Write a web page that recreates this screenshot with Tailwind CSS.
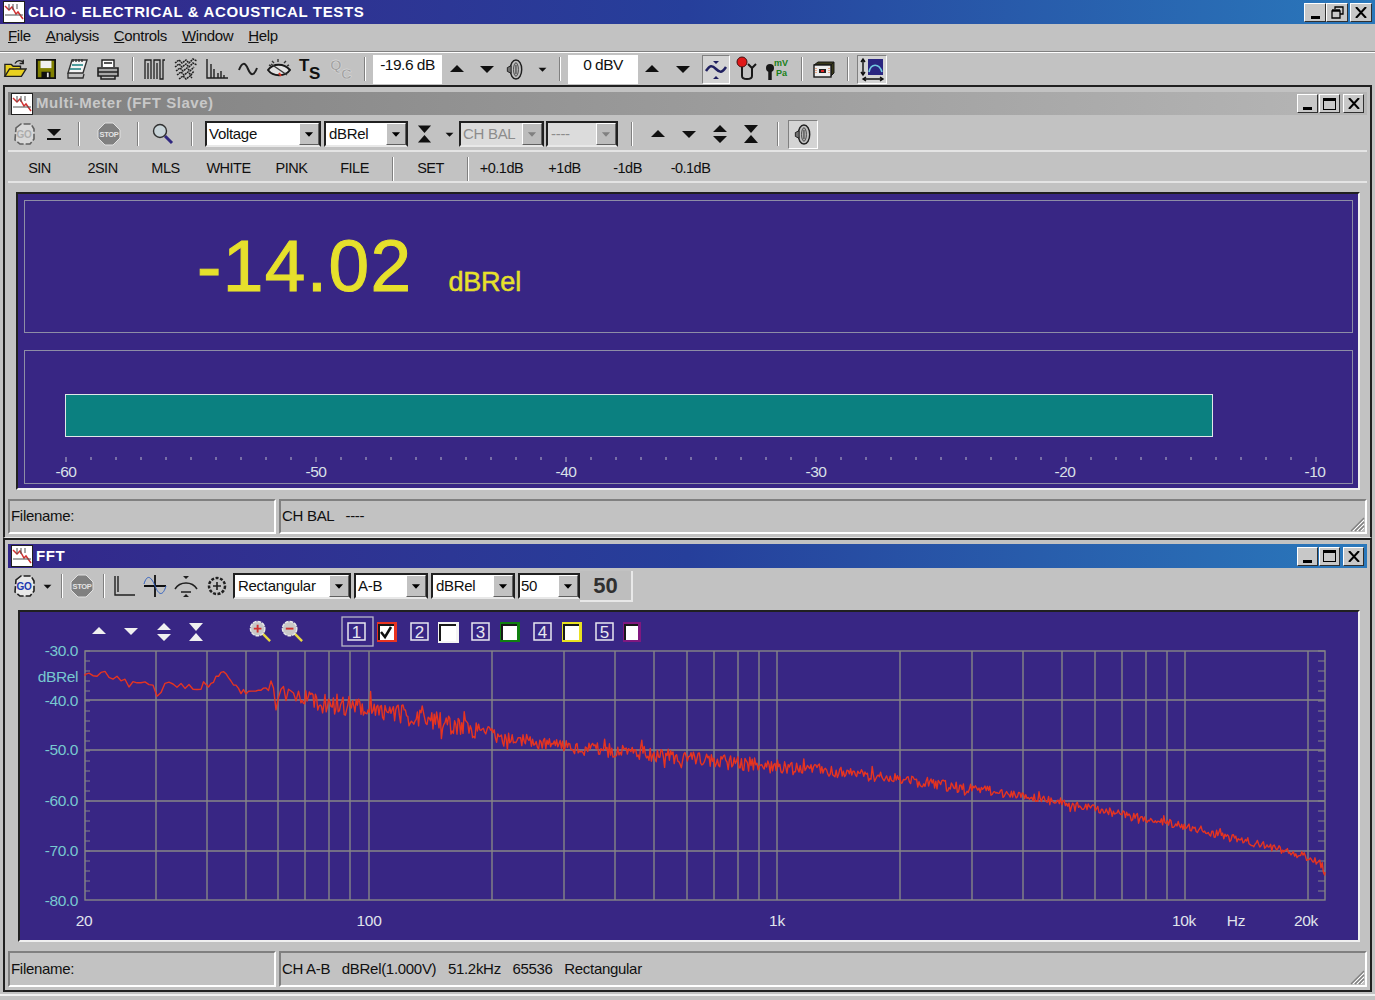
<!DOCTYPE html>
<html lang="en">
<head>
<meta charset="UTF-8" />
<title>CLIO - Electrical & Acoustical Tests</title>
<script src="https://cdn.jsdelivr.net/npm/@tailwindcss/browser@4"></script>
</head>
<body class="m-0">
<!-- shared toolbar glyphs -->
<svg width="0" height="0" class="absolute">
  <symbol id="appicon" viewBox="0 0 22 22">
    <rect x="0.5" y="0.5" width="21" height="21" fill="#fff" stroke="#202020"/>
    <path d="M2 5 6 9 9 6 13 13 15 11 20 18" fill="none" stroke="#d03030" stroke-width="1.5"/>
    <path d="M2 14H20M6 3V9M10 3V9M14 3V8" fill="none" stroke="#505050"/>
  </symbol>
  <symbol id="up" viewBox="0 0 16 12"><path d="M8 2 15 9H1Z" fill="currentColor"/></symbol>
  <symbol id="down" viewBox="0 0 16 12"><path d="M1 3H15L8 10Z" fill="currentColor"/></symbol>
  <symbol id="updown" viewBox="0 0 16 20"><path d="M8 1 15 8H1ZM1 12H15L8 19Z" fill="currentColor"/></symbol>
  <symbol id="collapse" viewBox="0 0 16 20"><path d="M1 1H15L8 9ZM8 11 15 19H1Z" fill="currentColor"/></symbol>
  <symbol id="speaker" viewBox="0 0 18 24">
    <ellipse cx="10" cy="12" rx="6" ry="10" fill="#c0c0c0" stroke="#202020" stroke-width="1.5"/>
    <ellipse cx="10" cy="12" rx="2.5" ry="7" fill="none" stroke="#404040"/>
    <path d="M5 8 1 10V14L5 16Z" fill="#707070" stroke="#202020"/>
    <path d="M10 7V17" stroke="#202020"/>
  </symbol>
  <symbol id="wave" viewBox="0 0 24 24">
    <path d="M2 14C6 8 8 8 12 12S18 16 22 10" fill="none" stroke="#202060" stroke-width="2.5"/>
    <path d="M9 4H15L12 7ZM9 22H15L12 19Z" fill="#202060"/>
  </symbol>
  <symbol id="gobody" viewBox="0 0 24 24">
    <path d="M4 6 9 2H19L22 7V17L18 22H8L3 18Z" fill="#e8e8e8" stroke="#202020" stroke-width="1.6" stroke-dasharray="7 2"/>
  </symbol>
  <symbol id="stopbody" viewBox="0 0 24 24">
    <path d="M8 1H16L23 8V16L16 23H8L1 16V8Z" fill="#808080" stroke="#e0e0e0"/>
  </symbol>
  <symbol id="grip" viewBox="0 0 16 16">
    <path d="M15 2 2 15M15 6 6 15M15 10 10 15" stroke="#808080" stroke-width="1.3"/>
    <path d="M15 4 4 15M15 8 8 15M15 12 12 15" stroke="#fff"/>
  </symbol>
  <symbol id="zoomin" viewBox="0 0 24 24">
    <path d="M14 14 22 22" stroke="#e8d840" stroke-width="2.5"/>
    <circle cx="9" cy="9" r="7.5" fill="#c8c8c8" stroke="#e8e8e8" stroke-width="1.5" stroke-dasharray="4 1"/>
    <path d="M5 9H13M9 5V13" stroke="#d03030" stroke-width="2"/>
  </symbol>
  <symbol id="zoomout" viewBox="0 0 24 24">
    <path d="M14 14 22 22" stroke="#e8d840" stroke-width="2.5"/>
    <circle cx="9" cy="9" r="7.5" fill="#c8c8c8" stroke="#e8e8e8" stroke-width="1.5" stroke-dasharray="4 1"/>
    <path d="M5 9H13" stroke="#d03030" stroke-width="2"/>
  </symbol>
</svg>

<div class="relative w-[1375px] h-[1000px] overflow-hidden bg-[#c2c2c2] text-[#101010] font-['Liberation_Sans',sans-serif] text-[15px]">

  <!-- main title bar -->
  <div class="h-[24px] flex items-center bg-gradient-to-r from-[#33278a] via-[#263f9b] to-[#2a78bb]">
    <svg class="w-[22px] h-[22px] ml-[3px]"><use href="#appicon"/></svg>
    <span class="ml-[3px] text-white font-bold text-[15px] tracking-[0.65px]">CLIO - ELECTRICAL &amp; ACOUSTICAL TESTS</span>
    <div class="ml-auto mr-[3px] flex">
      <button class="w-[22px] h-[19px] bg-[#c8c8c8] border border-t-white border-l-white border-r-[#303030] border-b-[#303030] flex items-end justify-center pb-[2px]"><span class="block w-[9px] h-[3px] bg-black"></span></button>
      <button class="w-[22px] h-[19px] bg-[#c8c8c8] border border-t-white border-l-white border-r-[#303030] border-b-[#303030] flex items-center justify-center">
        <svg class="w-[13px] h-[13px]" viewBox="0 0 13 13"><path d="M4 3V1H12V8H9M1 5H9V12H1ZM1 4H9" fill="none" stroke="#000" stroke-width="1.3"/></svg>
      </button>
      <button class="ml-[2px] w-[22px] h-[19px] bg-[#c8c8c8] border border-t-white border-l-white border-r-[#303030] border-b-[#303030] flex items-center justify-center">
        <svg class="w-[12px] h-[11px]" viewBox="0 0 12 11"><path d="M1 0 11 11M11 0 1 11" stroke="#000" stroke-width="2"/></svg>
      </button>
    </div>
  </div>

  <!-- menu -->
  <div class="h-[27px] flex items-center gap-[15px] pl-[8px] pb-[3px] text-[15px] tracking-[-0.35px]">
    <span><u>F</u>ile</span><span><u>A</u>nalysis</span><span><u>C</u>ontrols</span><span><u>W</u>indow</span><span><u>H</u>elp</span>
  </div>
  <div class="h-[2px] border-t border-t-[#808080] border-b border-b-white"></div>

  <!-- main toolbar -->
  <div class="h-[32px] flex items-center">
    <div class="w-[30px] flex justify-center"><svg class="w-[24px] h-[22px]" viewBox="0 0 26 24"><path d="M2 20V7H9L11 9H19V12" fill="#e8d020" stroke="#202020" stroke-width="1.5"/><path d="M2 20 7 12H25L20 20Z" fill="#e8d020" stroke="#202020" stroke-width="1.5"/><path d="M13 6C15 2 20 2 22 5M22 2V6H18" fill="none" stroke="#202020" stroke-width="1.5"/></svg></div>
    <div class="w-[31px] flex justify-center"><svg class="w-[20px] h-[20px]" viewBox="0 0 22 22"><path d="M1 1H21V21H1Z" fill="#808000" stroke="#101010" stroke-width="2"/><rect x="5" y="2" width="12" height="8" fill="#f0f0f0"/><rect x="6" y="14" width="10" height="7" fill="#101010"/><rect x="12" y="15" width="2" height="5" fill="#e0e0e0"/></svg></div>
    <div class="w-[31px] flex justify-center"><svg class="w-[24px] h-[22px]" viewBox="0 0 24 22"><path d="M7 2H22L18 15H3Z" fill="#f4f4f4" stroke="#303030" stroke-width="1.4"/><path d="M3 15V20H18L19 16M8 1V4M11 1V4M14 1V4M17 1V4" fill="none" stroke="#303030" stroke-width="1.3"/><path d="M7 7H18M5 11H16" stroke="#188080" stroke-width="1.6"/></svg></div>
    <div class="w-[31px] flex justify-center"><svg class="w-[24px] h-[22px]" viewBox="0 0 24 22"><path d="M6 9V2H18V9" fill="#fff" stroke="#202020" stroke-width="1.4"/><path d="M2 10H22V18H2Z" fill="#a8a8a8" stroke="#202020" stroke-width="1.6"/><path d="M2 14H22M5 18V21H19V18M8 5H16" fill="none" stroke="#202020" stroke-width="1.5"/></svg></div>
    <div class="w-[1px] h-[24px] bg-[#808080] border-r border-r-white ml-[9px] mr-[5px] box-content"></div>
    <div class="w-[31px] flex justify-center"><svg class="w-[22px] h-[22px]" viewBox="0 0 22 22"><path d="M1 21V2H7V21M4 21V5M10 21V2H16V21H19V2H21M13 21V5" fill="none" stroke="#202020" stroke-width="1.3"/></svg></div>
    <div class="w-[31px] flex justify-center"><svg class="w-[24px] h-[24px]" viewBox="0 0 24 24"><path d="M1 6 5 3 8 6 12 3 15 6 19 2 23 4M1 10 5 7 8 10 12 7 15 10 19 6 23 8M2 14 6 11 9 14 13 11 16 14 20 10M3 18 7 15 10 18 14 15 17 18 20 14M5 22 9 19 12 22 16 19 18 21" fill="none" stroke="#202020" stroke-width="1.5" stroke-dasharray="2 .6"/></svg></div>
    <div class="w-[31px] flex justify-center"><svg class="w-[24px] h-[22px]" viewBox="0 0 24 22"><path d="M2 1V20H23M6 20V6M9 20V11M13 20V15M16 20V13M19 20V17" fill="none" stroke="#202020" stroke-width="1.4"/></svg></div>
    <div class="w-[31px] flex justify-center"><svg class="w-[20px] h-[14px]" viewBox="0 0 20 14"><path d="M1 8C4 0 7 0 10 7S16 14 19 6" fill="none" stroke="#202020" stroke-width="2"/></svg></div>
    <div class="w-[31px] flex justify-center"><svg class="w-[24px] h-[22px]" viewBox="0 0 24 22"><path d="M1 12C6 5 17 5 23 12 18 19 6 19 1 12Z" fill="#e0e0e0" stroke="#181818" stroke-width="2"/><path d="M4 6 20 17M11 1V4M5 3 7 5M19 3 17 5M2 7 4 8M22 7 20 8" stroke="#383838" stroke-width="1.4"/><path d="M12 15 14 18" stroke="#d83020" stroke-width="2"/></svg></div>
    <div class="w-[31px] flex justify-center"><svg class="w-[24px] h-[26px] overflow-visible" viewBox="0 0 24 26"><text x="1" y="15" font-weight="700" font-size="17" fill="#101010">T</text><text x="11" y="23" font-weight="700" font-size="17" fill="#101010">S</text></svg></div>
    <div class="w-[31px] flex justify-center"><svg class="w-[24px] h-[26px] overflow-visible" viewBox="0 0 24 26"><text x="1" y="14" font-weight="700" font-size="15" fill="#a0a0a0" stroke="#e8e8e8" stroke-width=".4">Q</text><text x="12" y="23" font-weight="700" font-size="15" fill="#a0a0a0" stroke="#e8e8e8" stroke-width=".4">C</text></svg></div>
    <div class="w-[1px] h-[24px] bg-[#808080] border-r border-r-white ml-[8px] mr-[7px] box-content"></div>
    <div class="w-[69px] h-[29px] bg-white text-center text-[15.5px] tracking-[-0.5px] leading-[19px]">-19.6 dB</div>
    <svg class="w-[16px] h-[12px] ml-[7px]"><use href="#up"/></svg>
    <svg class="w-[16px] h-[12px] ml-[14px]"><use href="#down"/></svg>
    <svg class="w-[18px] h-[23px] ml-[11px]"><use href="#speaker"/></svg>
    <svg class="w-[9px] h-[7px] ml-[14px]"><use href="#down"/></svg>
    <div class="w-[1px] h-[24px] bg-[#808080] border-r border-r-white ml-[12px] mr-[7px] box-content"></div>
    <div class="w-[70px] h-[29px] bg-white text-center text-[15.5px] tracking-[-0.5px] leading-[19px]">0 dBV</div>
    <svg class="w-[16px] h-[12px] ml-[6px]"><use href="#up"/></svg>
    <svg class="w-[16px] h-[12px] ml-[15px]"><use href="#down"/></svg>
    <div class="ml-[11px] w-[28px] h-[29px] bg-[#d4d4d4] border border-t-[#808080] border-l-[#808080] border-r-white border-b-white flex items-center justify-center"><svg class="w-[24px] h-[24px]"><use href="#wave"/></svg></div>
    <div class="w-[31px] flex justify-center"><svg class="w-[22px] h-[26px]" viewBox="0 0 22 26"><path d="M7 10V20C7 24 17 24 17 20V11M13 8 17 12 21 8" fill="none" stroke="#181818" stroke-width="2"/><circle cx="7" cy="6" r="5" fill="#e01818" stroke="#401010"/></svg></div>
    <div class="w-[32px] flex justify-center"><svg class="w-[24px] h-[24px]" viewBox="0 0 24 24"><circle cx="5" cy="11" r="4" fill="#181818"/><path d="M5 13V23" stroke="#181818" stroke-width="3.5"/><text x="9" y="9" font-weight="700" font-size="9" fill="#188018">mV</text><text x="11" y="19" font-weight="700" font-size="9" fill="#188018">Pa</text></svg></div>
    <div class="w-[1px] h-[24px] bg-[#808080] border-r border-r-white ml-[8px] mr-[10px] box-content"></div>
    <svg class="w-[22px] h-[20px]" viewBox="0 0 22 20"><path d="M1 6H18L21 3H5ZM18 6V17L21 14V3" fill="#383818" stroke="#181818"/><rect x="1" y="6" width="17" height="12" fill="#ececec" stroke="#181818" stroke-width="1.4"/><rect x="6" y="10" width="7" height="4" fill="#202020"/><rect x="8" y="11" width="3" height="2" fill="#e02020"/><path d="M3 9V15M16 9V15" stroke="#e06020" stroke-dasharray="1 1"/></svg>
    <div class="w-[1px] h-[24px] bg-[#808080] border-r border-r-white ml-[12px] mr-[8px] box-content"></div>
    <div class="w-[30px] h-[29px] bg-[#d4d4d4] border border-t-[#808080] border-l-[#808080] border-r-white border-b-white flex items-center justify-center">
      <svg class="w-[26px] h-[25px]" viewBox="0 0 26 25"><rect x="9" y="2" width="15" height="16" fill="#2a2580"/><path d="M10 15C12 6 20 6 23 15" fill="none" stroke="#70c8e0" stroke-width="1.6"/><path d="M4 2V18M2 5 4 2 6 5M2 15 4 18 6 15M4 22H24M7 20 4 22 7 24M21 20 24 22 21 24" fill="none" stroke="#101010" stroke-width="1.4"/></svg>
    </div>
  </div>

  <!-- Multi-Meter window -->
  <div class="ml-[3px] w-[1369px] h-[453px] border-t-2 border-l-2 border-r-2 border-[#202020] border-b border-b-[#e8e8e8] bg-[#c2c2c2] px-[3px] pt-[5px]">
    <div class="h-[23px] flex items-center bg-gradient-to-r from-[#808080] to-[#b6b6b6]">
      <svg class="w-[22px] h-[22px] ml-[3px]"><use href="#appicon"/></svg>
      <span class="ml-[3px] text-[#c8c8c8] font-bold text-[15px] tracking-[0.55px]">Multi-Meter (FFT Slave)</span>
      <div class="ml-auto mr-[3px] flex">
        <button class="w-[21px] h-[19px] bg-[#c8c8c8] border border-t-white border-l-white border-r-[#303030] border-b-[#303030] flex items-end justify-center pb-[2px]"><span class="block w-[9px] h-[3px] bg-black"></span></button>
        <button class="ml-[1px] w-[21px] h-[19px] bg-[#c8c8c8] border border-t-white border-l-white border-r-[#303030] border-b-[#303030] flex items-center justify-center"><span class="block w-[13px] h-[12px] border border-black border-t-[3px]"></span></button>
        <button class="ml-[3px] w-[21px] h-[19px] bg-[#c8c8c8] border border-t-white border-l-white border-r-[#303030] border-b-[#303030] flex items-center justify-center"><svg class="w-[12px] h-[11px]" viewBox="0 0 12 11"><path d="M1 0 11 11M11 0 1 11" stroke="#000" stroke-width="2"/></svg></button>
      </div>
    </div>

    <!-- meter toolbar -->
    <div class="h-[37px] pt-[3px] flex items-center border-b-2 border-b-[#e4e4e4] text-[15px] tracking-[-0.3px]">
      <svg class="w-[24px] h-[24px] ml-[4px] opacity-60" viewBox="0 0 24 24"><use href="#gobody"/><text x="12" y="16" text-anchor="middle" font-weight="700" font-size="10" fill="#a0a0a0">GO</text></svg>
      <svg class="w-[16px] h-[14px] ml-[10px]" viewBox="0 0 16 14"><path d="M1 2H15L8 9ZM1 11H15V13H1Z" fill="#101010"/></svg>
      <div class="w-[1px] h-[24px] bg-[#808080] border-r border-r-white ml-[16px] mr-[17px] box-content"></div>
      <svg class="w-[24px] h-[24px]" viewBox="0 0 24 24"><use href="#stopbody"/><text x="12" y="15" text-anchor="middle" font-weight="700" font-size="7.500" fill="#e4e4e4">STOP</text></svg>
      <div class="w-[1px] h-[24px] bg-[#808080] border-r border-r-white ml-[16px] mr-[13px] box-content"></div>
      <svg class="w-[22px] h-[22px]" viewBox="0 0 22 22"><path d="M13 13 20 20" stroke="#302880" stroke-width="3"/><circle cx="8" cy="8" r="6.5" fill="#c8d4d8" stroke="#303030" stroke-width="1.4"/></svg>
      <div class="w-[1px] h-[24px] bg-[#808080] border-r border-r-white ml-[17px] mr-[12px] box-content"></div>

      <div class="w-[116px] h-[26px] bg-white border-2 border-t-[#202020] border-l-[#202020] border-r-[#202020] border-b-[#e8e8e8] flex items-center pl-[2px]">
        <span class="flex-1">Voltage</span>
        <span class="w-[20px] h-full bg-[#c2c2c2] border border-t-white border-l-white border-r-[#606060] border-b-[#606060] flex items-center justify-center"><svg class="w-[10px] h-[7px]" viewBox="0 0 16 12"><path d="M1 2H15L8 10Z" fill="#000"/></svg></span>
      </div>
      <div class="ml-[3px] w-[84px] h-[26px] bg-white border-2 border-t-[#202020] border-l-[#202020] border-r-[#202020] border-b-[#e8e8e8] flex items-center pl-[3px]">
        <span class="flex-1">dBRel</span>
        <span class="w-[20px] h-full bg-[#c2c2c2] border border-t-white border-l-white border-r-[#606060] border-b-[#606060] flex items-center justify-center"><svg class="w-[10px] h-[7px]" viewBox="0 0 16 12"><path d="M1 2H15L8 10Z" fill="#000"/></svg></span>
      </div>
      <svg class="w-[15px] h-[20px] ml-[9px]"><use href="#collapse"/></svg>
      <svg class="w-[9px] h-[7px] ml-[13px]"><use href="#down"/></svg>
      <div class="ml-[5px] w-[85px] h-[26px] bg-[#dcdcdc] border-2 border-t-[#202020] border-l-[#202020] border-r-[#202020] border-b-[#e8e8e8] flex items-center pl-[2px] text-[#8c8c8c]">
        <span class="flex-1">CH BAL</span>
        <span class="w-[20px] h-full bg-[#bcbcbc] border border-t-white border-l-white border-r-[#606060] border-b-[#606060] flex items-center justify-center"><svg class="w-[10px] h-[7px]" viewBox="0 0 16 12"><path d="M1 2H15L8 10Z" fill="#808080"/></svg></span>
      </div>
      <div class="ml-[2px] w-[72px] h-[26px] bg-[#dcdcdc] border-2 border-t-[#202020] border-l-[#202020] border-r-[#202020] border-b-[#e8e8e8] flex items-center pl-[3px] text-[#8c8c8c]">
        <span class="flex-1">----</span>
        <span class="w-[20px] h-full bg-[#bcbcbc] border border-t-white border-l-white border-r-[#606060] border-b-[#606060] flex items-center justify-center"><svg class="w-[10px] h-[7px]" viewBox="0 0 16 12"><path d="M1 2H15L8 10Z" fill="#808080"/></svg></span>
      </div>
      <div class="w-[1px] h-[24px] bg-[#808080] border-r border-r-white ml-[13px] mr-[17px] box-content"></div>
      <svg class="w-[16px] h-[12px]"><use href="#up"/></svg>
      <svg class="w-[16px] h-[12px] ml-[15px]"><use href="#down"/></svg>
      <svg class="w-[16px] h-[20px] ml-[15px]"><use href="#updown"/></svg>
      <svg class="w-[16px] h-[20px] ml-[15px]"><use href="#collapse"/></svg>
      <div class="w-[1px] h-[24px] bg-[#808080] border-r border-r-white ml-[18px] mr-[9px] box-content"></div>
      <div class="w-[30px] h-[29px] bg-[#d4d4d4] border border-t-[#808080] border-l-[#808080] border-r-white border-b-white flex items-center justify-center"><svg class="w-[18px] h-[23px]"><use href="#speaker"/></svg></div>
    </div>

    <!-- generator row -->
    <div class="h-[31px] pt-[4px] flex items-center border-b-2 border-b-[#e4e4e4] text-[14.5px] tracking-[-0.5px]">
      <span class="w-[63px] text-center">SIN</span>
      <span class="w-[63px] text-center">2SIN</span>
      <span class="w-[63px] text-center">MLS</span>
      <span class="w-[63px] text-center">WHITE</span>
      <span class="w-[63px] text-center">PINK</span>
      <span class="w-[63px] text-center">FILE</span>
      <div class="w-[1px] h-[24px] bg-[#808080] border-r border-r-white ml-[6px] mr-[5px] box-content"></div>
      <span class="w-[63px] text-center">SET</span>
      <div class="w-[1px] h-[24px] bg-[#808080] border-r border-r-white ml-[5px] mr-[1px] box-content"></div>
      <span class="w-[63px] text-center">+0.1dB</span>
      <span class="w-[63px] text-center">+1dB</span>
      <span class="w-[63px] text-center">-1dB</span>
      <span class="w-[63px] text-center">-0.1dB</span>
    </div>

    <!-- meter display -->
    <div class="mt-[9px] ml-[8px] w-[1344px] h-[298px] bg-[#382684] border-2 border-t-[#202020] border-l-[#202020] border-r-[#f0f0f0] border-b-[#f0f0f0] pl-[6px] pr-[5px] pt-[6px]">
      <div class="h-[133px] border border-[#8d8da6] flex items-baseline pl-[172px] pt-[29px] text-[#e6e02c]">
        <span class="text-[73px] leading-[72px] tracking-[1.4px] [-webkit-text-stroke:1px_#e6e02c]">-14.02</span>
        <span class="ml-[36px] text-[27px] tracking-[-0.2px] [-webkit-text-stroke:0.5px_#e6e02c]">dBRel</span>
      </div>
      <div class="mt-[17px] h-[134px] border border-[#8d8da6] pl-[40px] pt-[43px]">
        <div class="w-[1148px] h-[43px] bg-[#0b8080] border border-[#e0e8e8]"></div>
        <svg class="block -ml-[40px] mt-[1px] w-[1327px] h-[46px]" viewBox="24 437 1327 46">
          <path d="M65 456V461M90 456V459M115 456V459M140 456V459M165 456V459M190 456V459M215 456V459M240 456V459M265 456V459M290 456V459M315 456V461M340 456V459M365 456V459M390 456V459M415 456V459M440 456V459M465 456V459M490 456V459M515 456V459M540 456V459M565 456V461M590 456V459M615 456V459M640 456V459M665 456V459M690 456V459M715 456V459M740 456V459M765 456V459M790 456V459M815 456V461M840 456V459M865 456V459M890 456V459M915 456V459M940 456V459M965 456V459M990 456V459M1015 456V459M1040 456V459M1065 456V461M1090 456V459M1115 456V459M1140 456V459M1165 456V459M1190 456V459M1215 456V459M1240 456V459M1265 456V459M1290 456V459M1315 456V461" stroke="#b8b8c8" fill="none"/>
          <g fill="#d8e0e8" font-size="15.5" text-anchor="middle" letter-spacing="-.4">
            <text x="65" y="476">-60</text><text x="315" y="476">-50</text><text x="565" y="476">-40</text><text x="815" y="476">-30</text><text x="1064" y="476">-20</text><text x="1314" y="476">-10</text>
          </g>
        </svg>
      </div>
    </div>

    <!-- status -->
    <div class="mt-[9px] flex h-[35px] text-[15px] tracking-[-0.3px]">
      <div class="w-[268px] border-2 border-t-[#808080] border-l-[#808080] border-r-white border-b-white flex items-center pl-[1px]">Filename:</div>
      <div class="ml-[3px] w-[1088px] relative border-2 border-t-[#808080] border-l-[#808080] border-r-white border-b-white flex items-center pl-[1px]"><span class="whitespace-pre">CH BAL   ----</span>
        <svg class="absolute right-0 bottom-0 w-[16px] h-[16px]"><use href="#grip"/></svg>
      </div>
    </div>
  </div>

  <!-- FFT window -->
  <div class="ml-[3px] w-[1369px] h-[454px] border-2 border-[#202020] bg-[#c2c2c2] px-[3px] pt-[4px]">
    <div class="h-[24px] flex items-center bg-gradient-to-r from-[#33278a] via-[#263f9b] to-[#2a78bb]">
      <svg class="w-[22px] h-[22px] ml-[3px]"><use href="#appicon"/></svg>
      <span class="ml-[3px] text-white font-bold text-[15px] tracking-[0.6px]">FFT</span>
      <div class="ml-auto mr-[3px] flex">
        <button class="w-[21px] h-[19px] bg-[#c8c8c8] border border-t-white border-l-white border-r-[#303030] border-b-[#303030] flex items-end justify-center pb-[2px]"><span class="block w-[9px] h-[3px] bg-black"></span></button>
        <button class="ml-[1px] w-[21px] h-[19px] bg-[#c8c8c8] border border-t-white border-l-white border-r-[#303030] border-b-[#303030] flex items-center justify-center"><span class="block w-[13px] h-[12px] border border-black border-t-[3px]"></span></button>
        <button class="ml-[3px] w-[21px] h-[19px] bg-[#c8c8c8] border border-t-white border-l-white border-r-[#303030] border-b-[#303030] flex items-center justify-center"><svg class="w-[12px] h-[11px]" viewBox="0 0 12 11"><path d="M1 0 11 11M11 0 1 11" stroke="#000" stroke-width="2"/></svg></button>
      </div>
    </div>

    <!-- fft toolbar -->
    <div class="h-[35px] pt-[1px] flex items-center text-[15px] tracking-[-0.3px]">
      <svg class="w-[24px] h-[24px] ml-[4px]" viewBox="0 0 24 24"><use href="#gobody"/><text x="12" y="16" text-anchor="middle" font-weight="700" font-size="10" fill="#2038b0">GO</text></svg>
      <svg class="w-[9px] h-[7px] ml-[7px]"><use href="#down"/></svg>
      <div class="w-[1px] h-[24px] bg-[#808080] border-r border-r-white ml-[9px] mr-[7px] box-content"></div>
      <svg class="w-[24px] h-[24px]" viewBox="0 0 24 24"><use href="#stopbody"/><text x="12" y="15" text-anchor="middle" font-weight="700" font-size="7.500" fill="#e4e4e4">STOP</text></svg>
      <div class="w-[1px] h-[24px] bg-[#808080] border-r border-r-white ml-[9px] mr-[7px] box-content"></div>
      <svg class="w-[24px] h-[22px]" viewBox="0 0 24 22"><path d="M3 1V20H23M6 1V17" fill="none" stroke="#202020" stroke-width="1.4"/></svg>
      <svg class="w-[24px] h-[24px] ml-[7px]" viewBox="0 0 24 24"><path d="M1 12H23M12 1V23" stroke="#101010" stroke-width="1.8"/><path d="M1 10C4 0 8 2 12 12S20 22 23 12" fill="none" stroke="#3060c0"/></svg>
      <svg class="w-[24px] h-[24px] ml-[7px]" viewBox="0 0 24 24"><path d="M1 15C6 7 18 7 23 15M7 18H17" fill="none" stroke="#202020" stroke-width="1.5"/><path d="M9 2H15L12 5ZM9 23H15L12 20Z" fill="#202020"/></svg>
      <svg class="w-[22px] h-[22px] ml-[8px]" viewBox="0 0 22 22"><circle cx="11" cy="11" r="8" fill="none" stroke="#202020" stroke-width="2.5" stroke-dasharray="3 1.5"/><path d="M11 7V15M7 11H15" stroke="#202020" stroke-width="1.6"/></svg>
      <div class="ml-[5px] w-[118px] h-[26px] bg-white border-2 border-t-[#202020] border-l-[#202020] border-r-[#202020] border-b-[#e8e8e8] flex items-center pl-[3px]">
        <span class="flex-1">Rectangular</span>
        <span class="w-[20px] h-full bg-[#c2c2c2] border border-t-white border-l-white border-r-[#606060] border-b-[#606060] flex items-center justify-center"><svg class="w-[10px] h-[7px]" viewBox="0 0 16 12"><path d="M1 2H15L8 10Z" fill="#000"/></svg></span>
      </div>
      <div class="ml-[3px] w-[74px] h-[26px] bg-white border-2 border-t-[#202020] border-l-[#202020] border-r-[#202020] border-b-[#e8e8e8] flex items-center pl-[2px]">
        <span class="flex-1">A-B</span>
        <span class="w-[20px] h-full bg-[#c2c2c2] border border-t-white border-l-white border-r-[#606060] border-b-[#606060] flex items-center justify-center"><svg class="w-[10px] h-[7px]" viewBox="0 0 16 12"><path d="M1 2H15L8 10Z" fill="#000"/></svg></span>
      </div>
      <div class="ml-[3px] w-[84px] h-[26px] bg-white border-2 border-t-[#202020] border-l-[#202020] border-r-[#202020] border-b-[#e8e8e8] flex items-center pl-[3px]">
        <span class="flex-1">dBRel</span>
        <span class="w-[20px] h-full bg-[#c2c2c2] border border-t-white border-l-white border-r-[#606060] border-b-[#606060] flex items-center justify-center"><svg class="w-[10px] h-[7px]" viewBox="0 0 16 12"><path d="M1 2H15L8 10Z" fill="#000"/></svg></span>
      </div>
      <div class="ml-[3px] w-[62px] h-[26px] bg-white border-2 border-t-[#202020] border-l-[#202020] border-r-[#202020] border-b-[#e8e8e8] flex items-center pl-[1px]">
        <span class="flex-1">50</span>
        <span class="w-[20px] h-full bg-[#c2c2c2] border border-t-white border-l-white border-r-[#606060] border-b-[#606060] flex items-center justify-center"><svg class="w-[10px] h-[7px]" viewBox="0 0 16 12"><path d="M1 2H15L8 10Z" fill="#000"/></svg></span>
      </div>
      <div class="w-[53px] h-[31px] bg-[#bebebe] border-b-2 border-r-2 border-[#e8e8e8] flex items-center justify-center font-bold text-[22px] tracking-normal text-[#303030]">50</div>
    </div>

    <!-- fft plot -->
    <div class="mt-[7px] ml-[10px] w-[1342px] h-[332px] relative bg-[#382684] border-2 border-t-[#202020] border-l-[#202020] border-r-[#f0f0f0] border-b-[#f0f0f0]">
      <svg class="block w-[1338px] h-[328px]" viewBox="20 612 1338 328">
        <g stroke="#868686" stroke-width="1.4" fill="none">
          <rect x="85" y="651" width="1240" height="249"/>
          <path d="M85 700H1325M85 750H1325M85 801H1325M85 851H1325"/>
          <path d="M156 651V900M207 651V900M246 651V900M278 651V900M305 651V900M329 651V900M350 651V900M369 651V900M492 651V900M564 651V900M615 651V900M654 651V900M687 651V900M714 651V900M738 651V900M759 651V900M777 651V900M900 651V900M972 651V900M1023 651V900M1062 651V900M1095 651V900M1122 651V900M1146 651V900M1167 651V900M1185 651V900M1308 651V900"/>
        </g>
        <path id="ticks" stroke="#868686" fill="none"/>
        <path id="trace" fill="none" stroke="#e63420" stroke-width="1.4" stroke-linejoin="round"/>

        <g fill="#77c8d0" font-size="15.5" text-anchor="end" letter-spacing="-.4">
          <text x="78" y="656">-30.0</text><text x="78" y="682">dBRel</text><text x="78" y="706">-40.0</text><text x="78" y="755">-50.0</text><text x="78" y="806">-60.0</text><text x="78" y="856">-70.0</text><text x="78" y="906">-80.0</text>
        </g>
        <g fill="#e0e4ec" font-size="15.5" text-anchor="middle" letter-spacing="-.3">
          <text x="84" y="926">20</text><text x="369" y="926">100</text><text x="777" y="926">1k</text><text x="1184" y="926">10k</text><text x="1236" y="926">Hz</text><text x="1306" y="926">20k</text>
        </g>

        <!-- plot toolbar -->
        <g color="#f0f0f0">
          <use href="#up" x="91" y="625" width="16" height="12"/>
          <use href="#down" x="123" y="625" width="16" height="12"/>
          <use href="#updown" x="156" y="622" width="16" height="20"/>
          <use href="#collapse" x="188" y="622" width="16" height="20"/>
          <use href="#zoomin" x="249" y="620" width="23" height="23"/>
          <use href="#zoomout" x="281" y="620" width="23" height="23"/>
        </g>
        <rect x="342" y="617" width="31" height="29" fill="none" stroke="#b8b8c8" stroke-width="1.3"/>
        <g fill="none" stroke="#e8e8f0" stroke-width="1.5">
          <rect x="348" y="623" width="17" height="17"/><rect x="411" y="623" width="17" height="17"/><rect x="472" y="623" width="17" height="17"/><rect x="534" y="623" width="17" height="17"/><rect x="596" y="623" width="17" height="17"/>
        </g>
        <g fill="#e8e8f0" font-size="17" text-anchor="middle">
          <text x="356.500" y="638">1</text><text x="419.500" y="638">2</text><text x="480.500" y="638">3</text><text x="542.500" y="638">4</text><text x="604.500" y="638">5</text>
        </g>
        <!-- curve colour swatches -->
        <rect x="377" y="622" width="20" height="20" fill="#e83420"/><rect x="379" y="625" width="15" height="15" fill="#fff"/><path d="M379 640V625H394" fill="none" stroke="#181818" stroke-width="2"/>
        <rect x="438" y="622" width="21" height="21" fill="#f4f4f4"/><rect x="440" y="625" width="16" height="16" fill="#fff"/><path d="M440 641V625H456" fill="none" stroke="#181818" stroke-width="2"/>
        <rect x="500" y="622" width="20" height="20" fill="#108010"/><rect x="502" y="625" width="15" height="15" fill="#fff"/><path d="M502 640V625H517" fill="none" stroke="#181818" stroke-width="2"/>
        <rect x="562" y="622" width="20" height="20" fill="#e8e020"/><rect x="564" y="625" width="15" height="15" fill="#fff"/><path d="M564 640V625H579" fill="none" stroke="#181818" stroke-width="2"/>
        <rect x="623" y="622" width="18" height="20" fill="#801880"/><rect x="625" y="625" width="13" height="15" fill="#fff"/><path d="M625 640V625H638" fill="none" stroke="#181818" stroke-width="2"/>
        <path d="M381 632 385 637 391 627" fill="none" stroke="#101010" stroke-width="2.500"/>
      </svg>
    </div>

    <!-- status -->
    <div class="mt-[9px] flex h-[36px] text-[15px] tracking-[-0.3px]">
      <div class="w-[268px] border-2 border-t-[#808080] border-l-[#808080] border-r-white border-b-white flex items-center pl-[1px]">Filename:</div>
      <div class="ml-[3px] w-[1088px] relative border-2 border-t-[#808080] border-l-[#808080] border-r-white border-b-white flex items-center pl-[1px]"><span class="whitespace-pre">CH A-B   dBRel(1.000V)   51.2kHz   65536   Rectangular</span>
        <svg class="absolute right-0 bottom-0 w-[16px] h-[16px]"><use href="#grip"/></svg>
      </div>
    </div>
  </div>
  <div class="h-[2px] mt-[2px] bg-[#f0f0f0]"></div>
</div>

<script>
    // fixed seed so the trace is the same on every load
    let seed = 20011
    const rnd = () => {
        seed = (seed * 16807) % 2147483647
        return seed / 2147483647
    }

    // rough outline of the spectrum, page coordinates
    const curve = [[85,676],[105,674],[125,682],[152,683],[156,696],[160,696],[163,681],[180,686],[205,687],[225,672],[240,692],[270,690],[300,696],[335,704],[369,708],[440,722],[500,736],[560,746],[640,753],[700,760],[777,767],[850,773],[920,782],[1000,793],[1050,800],[1100,810],[1184,826],[1250,842],[1300,855],[1318,862],[1325,872]]

    const baseAt = (x) => {
        for (let i = 1; i < curve.length; i++) {
            if (x <= curve[i][0]) {
                const a = curve[i - 1], b = curve[i]
                return a[1] + (b[1] - a[1]) * (x - a[0]) / (b[0] - a[0])
            }
        }
        return curve[curve.length - 1][1]
    }

    const noiseAt = (x) => {
        if (x < 270) return 3.5
        if (x < 480) return 13
        if (x < 800) return 9
        if (x < 1000) return 7
        return 5
    }

    let d = "M85 676"
    for (let x = 85; x < 1325; x += x < 200 ? 4 : x < 300 ? 2.5 : 1.2) {
        const spike = rnd() < 0.08 ? 1.5 : 0.8
        const y = baseAt(x) + (rnd() - 0.5) * 2 * noiseAt(x) * spike
        d += "L" + x.toFixed(1) + " " + y.toFixed(1)
    }
    d += "L1325 872"
    document.getElementById("trace").setAttribute("d", d)

    // small ticks on both sides of the plot
    let t = ""
    for (let y = 651; y <= 900; y += 10) {
        t += "M85 " + y + "h5M1325 " + y + "h-7"
    }
    document.getElementById("ticks").setAttribute("d", t)
</script>
</body>
</html>
